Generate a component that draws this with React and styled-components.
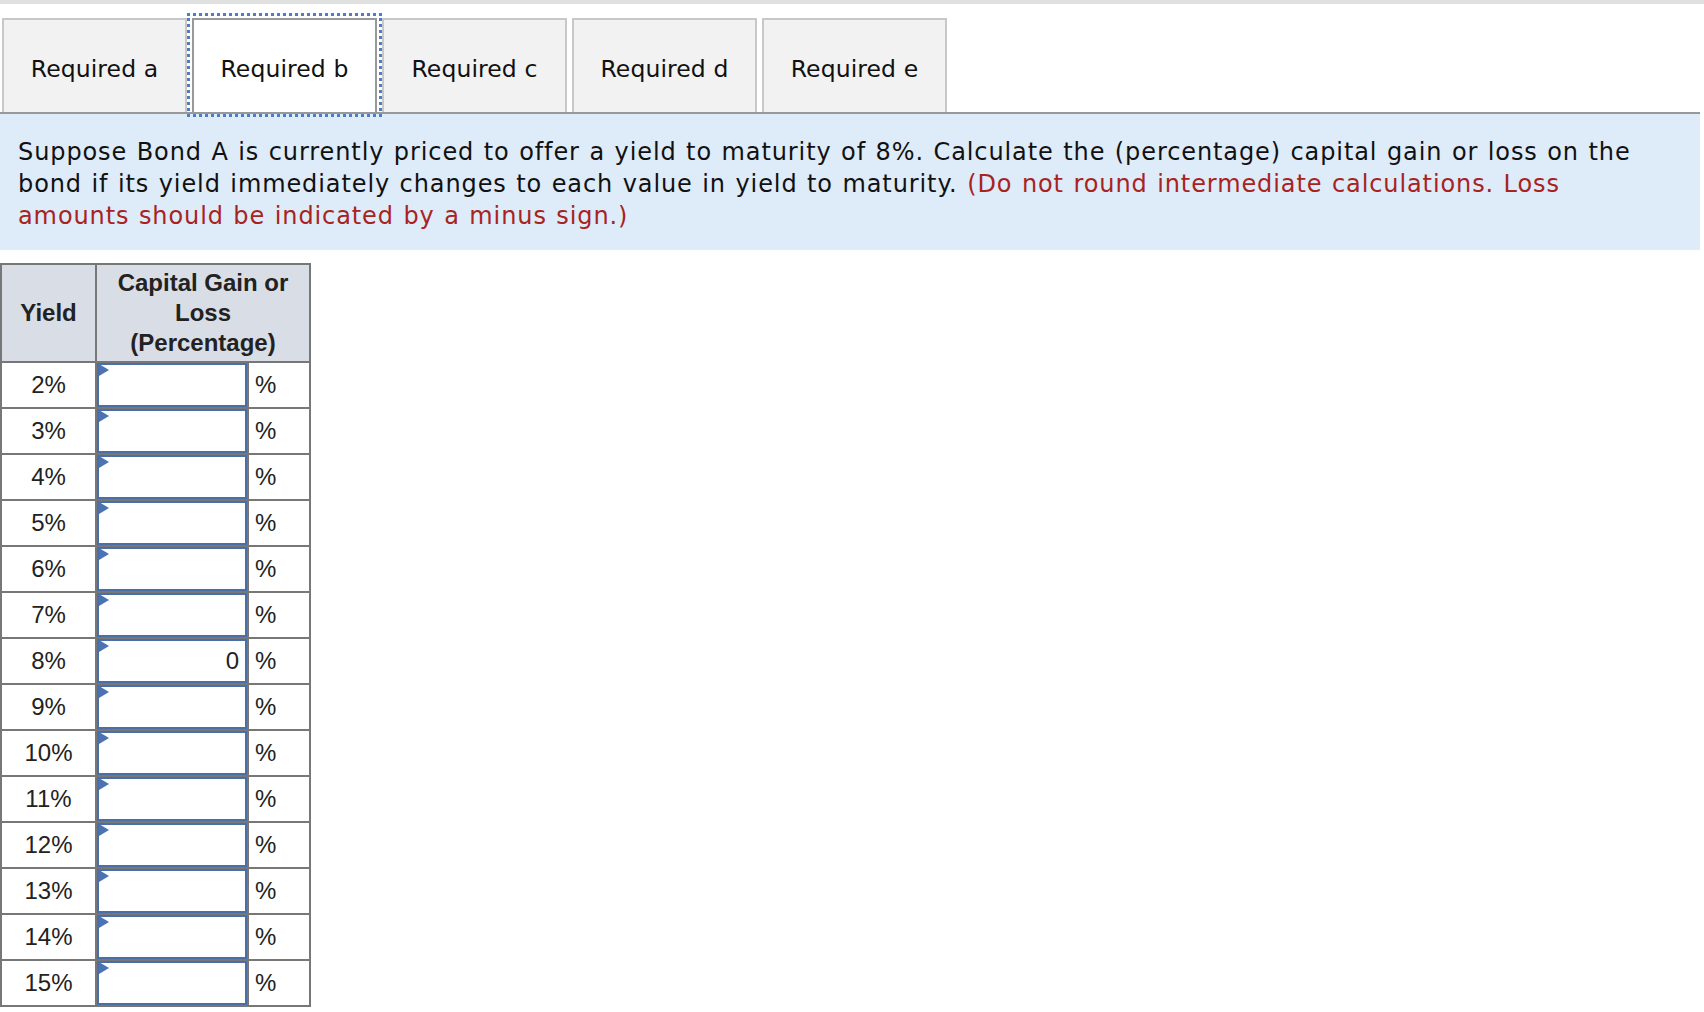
import React from "react";
import styled, { createGlobalStyle } from "styled-components";

const GlobalStyle = createGlobalStyle`
  html, body {
    margin: 0;
    padding: 0;
    background: #fff;
  }
  body {
    font-family: "DejaVu Sans", Verdana, sans-serif;
  }
`;

const Page = styled.div`
  width: 1704px;
`;

const TopBar = styled.div`
  height: 4px;
  background: #e0e0e0;
`;

const TabRow = styled.div`
  display: flex;
  gap: 5px;
  margin-top: 14px;
  padding-left: 2px;
  width: 1698px;
  border-bottom: 2px solid #999;
`;

const Tab = styled.button`
  width: 185px;
  height: 94px;
  box-sizing: border-box;
  margin: 0;
  padding: 6px 0 0;
  border: 2px solid ${(p) => (p.$active ? "#999" : "#c8c8c8")};
  border-bottom: none;
  background: ${(p) => (p.$active ? "#fff" : "#f2f2f2")};
  outline: ${(p) => (p.$active ? "3px dotted #4f7cc4" : "none")};
  outline-offset: ${(p) => (p.$active ? "2px" : "0")};
  font-family: "DejaVu Sans", Verdana, sans-serif;
  font-size: 23.5px;
  letter-spacing: 0.1px;
  color: #111;
  display: flex;
  align-items: center;
  justify-content: center;
  cursor: pointer;
`;

const Prompt = styled.div`
  width: 1700px;
  box-sizing: border-box;
  background: #deebf8;
  padding: 22px 48px 18px 18px;
  font-size: 24px;
  line-height: 32px;
  letter-spacing: 0.9px;
  word-spacing: 1px;
  color: #111;
`;

const Note = styled.span`
  color: #a8231f;
`;

const Table = styled.table`
  margin-top: 13px;
  width: 309px;
  table-layout: fixed;
  border-collapse: collapse;
  font-family: "Liberation Sans", Arial, sans-serif;
  font-size: 24px;
  color: #222;
  border: 2px solid #777;
`;

const Col = styled.col`
  width: ${(p) => p.$w}px;
`;

const HeadCell = styled.th`
  background: #d9dde6;
  border: 2px solid #777;
  font-weight: bold;
  line-height: 30px;
  padding: 3px 4px;
  color: #222;
`;

const YieldCell = styled.td`
  border: 2px solid #777;
  height: 44px;
  padding: 0;
  text-align: center;
`;

const InputCell = styled.td`
  border: 2px solid #777;
  border-right: none;
  padding: 0;
  position: relative;
`;

const Flag = styled.span`
  position: absolute;
  left: 2px;
  top: 1px;
  width: 0;
  height: 0;
  border-top: 6px solid transparent;
  border-bottom: 6px solid transparent;
  border-left: 10px solid #4a72b5;
`;

const Field = styled.input`
  display: block;
  width: 100%;
  height: 44px;
  box-sizing: border-box;
  margin: 0;
  border: 2px solid #4a6ea8;
  padding: 0 6px;
  font-family: "Liberation Sans", Arial, sans-serif;
  font-size: 24px;
  color: #222;
  text-align: right;
  outline: none;
  background: #fff;
`;

const PctCell = styled.td`
  border: 2px solid #777;
  border-left: 2px solid #777;
  padding: 0 0 0 6px;
  text-align: left;
`;

const yields = [2, 3, 4, 5, 6, 7, 8, 9, 10, 11, 12, 13, 14, 15];

export default function App() {
  return (
    <Page>
      <GlobalStyle />
      <TopBar />
      <TabRow>
        <Tab>Required a</Tab>
        <Tab $active>Required b</Tab>
        <Tab>Required c</Tab>
        <Tab>Required d</Tab>
        <Tab>Required e</Tab>
      </TabRow>
      <Prompt>
        Suppose Bond A is currently priced to offer a yield to maturity of 8%.
        Calculate the (percentage) capital gain or loss on the bond if its
        yield immediately changes to each value in yield to maturity.{" "}
        <Note>
          (Do not round intermediate calculations. Loss amounts should be
          indicated by a minus sign.)
        </Note>
      </Prompt>
      <Table>
        <colgroup>
          <Col $w={95} />
          <Col $w={152} />
          <Col $w={62} />
        </colgroup>
        <thead>
          <tr>
            <HeadCell>Yield</HeadCell>
            <HeadCell colSpan={2}>
              Capital Gain or
              <br />
              Loss
              <br />
              (Percentage)
            </HeadCell>
          </tr>
        </thead>
        <tbody>
          {yields.map((y) => (
            <tr key={y}>
              <YieldCell>{y}%</YieldCell>
              <InputCell>
                <Field defaultValue={y === 8 ? "0" : ""} />
                <Flag />
              </InputCell>
              <PctCell>%</PctCell>
            </tr>
          ))}
        </tbody>
      </Table>
    </Page>
  );
}
